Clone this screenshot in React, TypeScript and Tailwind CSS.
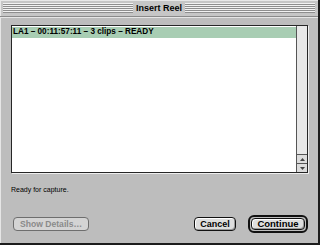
const font = "font-['Liberation_Sans',Arial,sans-serif]";

function ScrollArrow({ up }: { up?: boolean }) {
  return (
    <div className="h-[9px] flex items-center justify-center border-t border-[#555] bg-[#dcdcdc]">
      <svg width="5" height="3" viewBox="0 0 5 3">
        {up ? <polygon points="2.5,0 5,3 0,3" fill="#444" /> : <polygon points="0,0 5,0 2.5,3" fill="#444" />}
      </svg>
    </div>
  );
}

export default function App() {
  return (
    <div className={`w-[320px] h-[245px] bg-[#bdbdbd] flex flex-col border-r-2 border-b-2 border-[#1c1c1c] ${font}`}>
      {/* title bar */}
      <div className="h-[17px] shrink-0 bg-[#c6c6c6] border-b border-[#8a8a8a] shadow-[inset_1px_1px_0_#e8e8e8] px-[3px] pt-[3px]">
        <div className="h-[10px] relative flex justify-center bg-[repeating-linear-gradient(to_bottom,#f2f2f2_0px,#f2f2f2_1px,#8e8e8e_1px,#8e8e8e_2px)]">
          <div className="bg-[#c6c6c6] px-[3px] -mt-[1px] h-[12px] flex items-center text-[9px] font-bold text-black leading-none">
            Insert Reel
          </div>
        </div>
      </div>

      {/* body */}
      <div className="flex-1 flex flex-col pl-[11px] pr-[10px] shadow-[inset_1px_1px_0_#e6e6e6]">
        <div className="mt-[8px] h-[148px] w-[297px] border border-[#262626] flex shadow-[1px_1px_0_#eeeeee]">
          <div className="flex-1 bg-white pt-[1px]">
            <div className="h-[11px] bg-[#a8cdb3] flex items-center pl-[1px] text-[8.2px] font-bold text-black leading-none">
              LA1 – 00:11:57:11 – 3 clips – READY
            </div>
          </div>
          <div className="w-[11px] border-l border-[#555] bg-[#e8e8e8] flex flex-col justify-end">
            <ScrollArrow up />
            <ScrollArrow />
          </div>
        </div>

        <div className="mt-[13px] text-[7px] leading-[8px] text-black">Ready for capture.</div>

        <div className="mt-auto mb-[10px] h-[18px] flex items-center">
          <div className="ml-[2px] w-[76px] h-[14px] rounded-[4px] border border-[#6e6e6e] bg-[#d4d4d4] flex items-center justify-center text-[8.6px] font-bold text-[#8a8a8a] leading-none">
            Show Details…
          </div>
          <div className="ml-auto w-[42px] h-[14px] rounded-[4px] border border-[#111] bg-[#dedede] shadow-[inset_1px_1px_0_#ffffff,inset_-1px_-1px_0_#9a9a9a] flex items-center justify-center text-[9px] font-bold text-black leading-none">
            Cancel
          </div>
          <div className="ml-[12px] w-[60px] h-[18px] rounded-[6px] border-2 border-[#111] p-[1px] flex">
            <div className="flex-1 rounded-[4px] border border-[#111] bg-[#dedede] shadow-[inset_1px_1px_0_#ffffff,inset_-1px_-1px_0_#9a9a9a] flex items-center justify-center text-[9.5px] font-bold text-black leading-none">
              Continue
            </div>
          </div>
        </div>
      </div>
    </div>
  );
}
